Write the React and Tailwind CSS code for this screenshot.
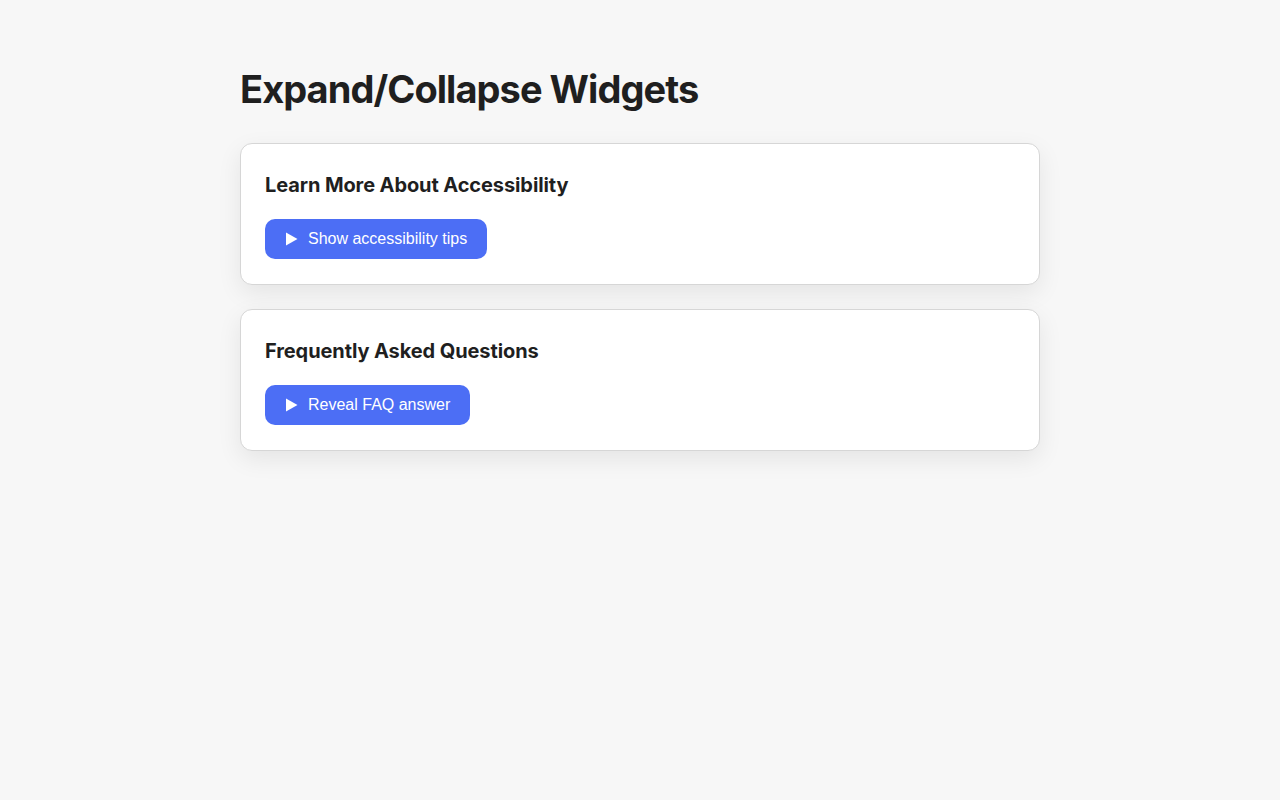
const widgets = [
  { title: "Learn More About Accessibility", label: "Show accessibility tips" },
  { title: "Frequently Asked Questions", label: "Reveal FAQ answer" },
]

const Widget = ({ title, label }) => {
  return (
    <section className="bg-white border border-[#d6d6d6] rounded-xl px-6 pt-6 pb-[25px] shadow-[0_8px_24px_rgba(0,0,0,0.08)]">
      <h2 className="text-[20px] leading-[34px] font-bold text-[#1f1f1f] tracking-[-0.005em] mb-[17px]">{title}</h2>
      <button type="button"
        className="flex items-center gap-[10px] h-10 px-5 rounded-[10px] bg-[#4c6ef5] text-white text-[16px] font-['Liberation_Sans',Arial,sans-serif] cursor-pointer">
        <svg width="13" height="14" viewBox="0 0 13 14" aria-hidden="true">
          <path d="M1 0.5 L12.5 7 L1 13.5 Z" fill="currentColor" />
        </svg>
        {label}
      </button>
    </section>
  )
}

export default function App() {
  return (
    <div className="min-h-screen bg-[#f7f7f7] font-['Inter',sans-serif]">
      <main className="w-[800px] mx-auto pt-[65px]">
        <h1 className="text-[38px] leading-[48px] font-bold text-[#1f1f1f] tracking-[-0.025em] mb-[30px]">Expand/Collapse Widgets</h1>
        <div className="flex flex-col gap-6">
          {widgets.map((w) => (
            <Widget key={w.title} {...w} />
          ))}
        </div>
      </main>
    </div>
  )
}
